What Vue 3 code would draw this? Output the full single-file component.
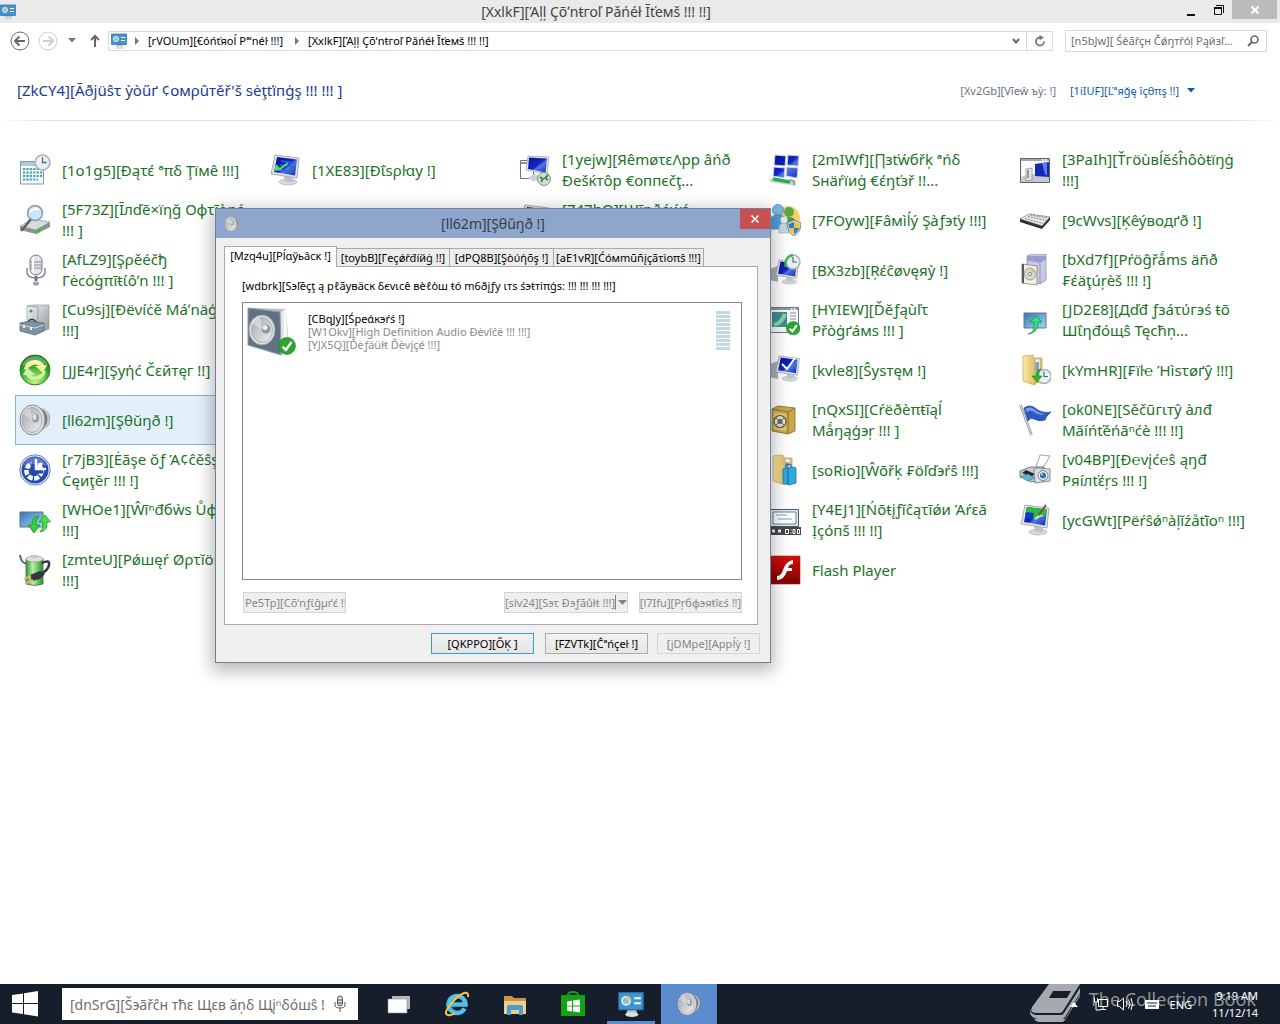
<script setup>
const columns = [
  [
    { icon: 'date', lines: ['[1o1g5][Ðąτέ ªπδ Ţïмê !!!]'] },
    { icon: 'index', lines: ['[5F73Z][Īлďē×ïηğ Оφτĩὸņś', '!!! ]'] },
    { icon: 'mic', lines: ['[AfLZ9][Şρěéčђ', 'Гėcóġπĩŧίôʼn !!! ]'] },
    { icon: 'device', lines: ['[Cu9sj][Ðëνíċě Máʼnäģēґ', '!!!]'] },
    { icon: 'sync', lines: ['[JJE4r][Şyήć Čεйтęг !!]'] },
    { icon: 'sound', lines: ['[ll62m][Şθŭŋð !]'], selected: true },
    { icon: 'ease', lines: ['[r7jB3][Ėãşe ŏƒ Ά¢ĉěŝş', 'Ċęиţĕг !!! !]'] },
    { icon: 'update', lines: ['[WHOe1][Ŵīⁿđбẁs Ůφďąτέ', '!!!]'] },
    { icon: 'power', lines: ['[zmteU][Рǿшęŕ Øρτĭöņš', '!!!]'] }
  ],
  [{ icon: 'display', lines: ['[1XE83][Ðΐsρŀαy !]'] }],
  [
    { icon: 'remote', lines: ['[1yejw][ЯêmøτεΛpp âńð', 'Ðešќтôр €оппєčţ...'] },
    { icon: 'display', lines: ['[747hO][Шĩņðóẃś', '!!!]'] }
  ],
  [
    { icon: 'network', lines: ['[2mIWf][∏зťẃбřķ ªńδ', 'Sнäŕïиġ €έŋťзř !!...'] },
    { icon: 'family', lines: ['[7FOyw][₣âмìĺý Şàƒэťу !!!]'] },
    { icon: 'recovery', lines: ['[BX3zb][Ŗέĉøνęяỳ !]'] },
    { icon: 'defaults', lines: ['[HYIEW][Ďĕƒąùľτ', 'Přòġґáмs !!! ]'] },
    { icon: 'system', lines: ['[kvle8][Ŝysтęм !]'] },
    { icon: 'safe', lines: ['[nQxSI][Cŕëðèπŧĩąĺ', 'Mǻŋąģэŗ !!! ]'] },
    { icon: 'workfolder', lines: ['[soRio][Ŵōřķ ₣öľďэŕŝ !!!]'] },
    { icon: 'notify', lines: ['[Y4EJ1][Ńõŧįƒĭĉąτīǿи Άŕεā', 'Ịçόпš !!! !!]'] },
    { icon: 'flash', lines: ['Flash Player'] }
  ],
  [
    { icon: 'trouble', lines: ['[3PaIh][Ťгöùвĺĕśĥôòŧïŋġ', '!!!]'] },
    { icon: 'keyboard', lines: ['[9cWvs][Ķêýвoдґð !]'] },
    { icon: 'programs', lines: ['[bXd7f][Pŕöĝřǻms äñð', '₣έäţúŗèš !!! !]'] },
    { icon: 'addfeat', lines: ['[JD2E8][Дďđ ƒзáτύгэś ŧō', 'Шΐηđóщŝ Tęcħņ...'] },
    { icon: 'history', lines: ['[kYmHR][₣ïŀ℮ Ήìsτøґŷ !!!]'] },
    { icon: 'flag', lines: ['[ok0NE][Sěčũгιтŷ àлđ', 'Mãíńťěńāⁿćè !!! !!]'] },
    { icon: 'printer', lines: ['[v04BP][Ð℮vįć℮ŝ ąŋđ', 'Pяíлťέŗs !!! !]'] },
    { icon: 'personal', lines: ['[ycGWt][Pëŕŝǿⁿàļĭźåťĩoⁿ !!!]'] }
  ]
]

const tabs = [
  '[Mzq4u][Pĺαўьâcĸ !]',
  '[toybB][Гeçǿřđíйġ !!]',
  '[dPQ8B][Şòύήõş !]',
  '[aE1vR][Ćόмmūñįçãτìoπŝ !!!]'
]
</script>

<template>
  <div class="desktop">
    <svg class="sprites" width="0" height="0" aria-hidden="true">
      <defs>
        <linearGradient id="gBlue" x1="0" y1="0" x2="1" y2="1"><stop offset="0" stop-color="#0a1290" /><stop offset=".5" stop-color="#1226c4" /><stop offset=".6" stop-color="#4f7ae6" /><stop offset="1" stop-color="#1226b4" /></linearGradient>
        <linearGradient id="gMetal" x1="0" y1="0" x2="1" y2="1"><stop offset="0" stop-color="#f4f5f6" /><stop offset="1" stop-color="#8f959c" /></linearGradient>
        <linearGradient id="gSky" x1="0" y1="0" x2="1" y2="1"><stop offset="0" stop-color="#2f78b8" /><stop offset="1" stop-color="#a5d8f2" /></linearGradient>
        <linearGradient id="gGold" x1="0" y1="0" x2="1" y2="0"><stop offset="0" stop-color="#fbeaa6" /><stop offset="1" stop-color="#dfbf66" /></linearGradient>
        <linearGradient id="gGreen" x1="0" y1="0" x2="1" y2="0"><stop offset="0" stop-color="#2e9a35" /><stop offset=".4" stop-color="#b5f0a8" /><stop offset="1" stop-color="#249030" /></linearGradient>
        <linearGradient id="gRed" x1="0" y1="0" x2="0" y2="1"><stop offset="0" stop-color="#d90d0d" /><stop offset="1" stop-color="#7c0303" /></linearGradient>
        <linearGradient id="gCone" x1="0" y1="0" x2="1" y2="1"><stop offset="0" stop-color="#a4a8ac" /><stop offset=".5" stop-color="#c9ccce" /><stop offset="1" stop-color="#f1f2f3" /></linearGradient>
        <radialGradient id="gOrb" cx=".5" cy=".9" r=".9"><stop offset="0" stop-color="#c8f57a" /><stop offset=".6" stop-color="#35a82c" /><stop offset="1" stop-color="#147018" /></radialGradient>
      </defs>

      <symbol id="i-monitor" viewBox="0 0 32 32">
        <ellipse cx="19" cy="28" rx="9" ry="3" fill="#d5d8db" stroke="#a9adb2" stroke-width=".6" />
        <path d="M15 22l9 2v4h-8z" fill="#bfc3c8" />
        <path d="M6 1l24 3-2 20L2 20z" fill="#dfe2e5" stroke="#8d9298" stroke-width=".7" />
        <path d="M8 3l20 2.500-2 16L5 18z" fill="url(#gBlue)" />
      </symbol>
      <symbol id="i-clock" viewBox="0 0 16 16">
        <circle cx="8" cy="8" r="7" fill="#e9eff3" stroke="#a9b0b6" stroke-width="1.500" />
        <path d="M8 3v5h4" fill="none" stroke="#4b6a82" stroke-width="1.200" />
      </symbol>
      <symbol id="i-tick" viewBox="0 0 16 16">
        <circle cx="8" cy="8" r="7.500" fill="#2aa52f" stroke="#1a8521" stroke-width=".6" />
        <path d="M4 8.500l3 3L12 4.500" fill="none" stroke="#fff" stroke-width="2.200" />
      </symbol>
      <symbol id="i-date" viewBox="0 0 32 32">
        <path d="M1.500 7.500h23V30h-23z" fill="#f5f9fb" stroke="#8b979f" />
        <path d="M2 8h22v4H2z" fill="#a9cfdf" />
        <path d="M4 15h19M4 18.500h19M4 22h19M4 25.500h15" stroke="#3ba0bd" stroke-width="2.200" stroke-dasharray="2.200 1.200" />
        <use href="#i-clock" x="15" y="0" width="17" height="17" />
      </symbol>
      <symbol id="i-index" viewBox="0 0 32 32">
        <path d="M1 22l13-7 17 3-14 8z" fill="#d8dadb" stroke="#8a8e92" stroke-width=".6" />
        <path d="M1 22l16 4 14-8v5l-14 7L1 26z" fill="#8b9095" />
        <path d="M17 26l4-2v4l-4 2z" fill="#3fba3f" />
        <path d="M12 15L3 26" stroke="#5c6066" stroke-width="2.500" stroke-linecap="round" />
        <circle cx="16" cy="9" r="7.500" fill="#c2defa" fill-opacity=".85" stroke="#8b98a6" stroke-width="1.500" />
        <path d="M11 8q4-5 9-2" stroke="#fff" fill="none" stroke-width="1.500" />
      </symbol>
      <symbol id="i-mic" viewBox="0 0 32 32">
        <path d="M8 14v4q0 6 9 6t9-6v-4" fill="none" stroke="#8b8993" stroke-width="1.600" />
        <rect x="11" y="1" width="12" height="20" rx="6" fill="#e3e3e8" stroke="#76747f" />
        <path d="M11.500 8h11M11.500 11h11M11.500 14h11" stroke="#8f8d99" />
        <path d="M14 3v16" stroke="#fff" stroke-width="2" />
        <path d="M17 22v5" stroke="#777580" stroke-width="3" />
        <ellipse cx="17" cy="29.500" rx="3" ry="2" fill="#a19fa9" />
      </symbol>
      <symbol id="i-device" viewBox="0 0 32 32">
        <path d="M8 2l5-1h17v24l-9 3-13-3z" fill="url(#gMetal)" stroke="#8f8f8a" stroke-width=".6" />
        <path d="M8 2l11 1v24" fill="none" stroke="#7f837f" stroke-width=".6" />
        <circle cx="12" cy="7" r="1.600" fill="#38a03a" />
        <path d="M9 18q4-6 9 1" fill="none" stroke="#30373d" stroke-width="1.500" />
        <path d="M1 19l10-2 14 2v8l-9 4-15-4z" fill="#7d93a3" stroke="#4d6170" stroke-width=".7" />
        <path d="M1 21l15 3 9-3" fill="none" stroke="#cbd6de" />
        <path d="M5 21v3M12 23v3" stroke="#f4f4f4" stroke-width="2" />
      </symbol>
      <symbol id="i-sync" viewBox="0 0 32 32">
        <circle cx="16" cy="16" r="15" fill="url(#gOrb)" stroke="#247d24" />
        <path d="M5 15Q7 6 16 6q6 0 9 5h3l-4 8-8-7h4q-4-3-8 0-3 1-4 4z" fill="#f5f1a0" />
        <path d="M27 17q-2 9-11 9-6 0-9-5H4l4-8 8 8h-4q4 3 8 0 3-1 4-4z" fill="#caf3a4" />
        <path d="M3 12Q7 2 16 2t13 9q-12-5-26 1z" fill="#fff" opacity=".3" />
      </symbol>
      <symbol id="i-sound" viewBox="0 0 32 32">
        <path d="M16 2l9 3q6 3 6 10t-6 10l-9 5z" fill="#777b80" />
        <path d="M22 4q7 4 7 11t-7 12M26 6q4 4 4 9t-4 9" fill="none" stroke="#c5c8cb" stroke-width="1.200" />
        <ellipse cx="13.500" cy="16" rx="12.500" ry="15" fill="#dfe0e2" stroke="#84888c" />
        <ellipse cx="13" cy="16" rx="10" ry="12.500" fill="url(#gCone)" stroke="#9a9ea2" stroke-width=".8" />
        <path d="M13 16L4 10q2-5 7-6z" fill="#fff" opacity=".35" />
        <ellipse cx="16.500" cy="14" rx="3.500" ry="4.500" fill="#989ca1" />
        <ellipse cx="15.500" cy="13" rx="2" ry="3" fill="#dfe1e3" />
      </symbol>
      <symbol id="i-ease" viewBox="0 0 32 32">
        <circle cx="16" cy="16" r="15.200" fill="#e4e9f4" stroke="#74809f" />
        <circle cx="16" cy="16" r="13.500" fill="#2449b5" />
        <circle cx="15" cy="17" r="7.500" fill="none" stroke="#fff" stroke-width="4.500" stroke-dasharray="5 1.500" />
        <path d="M15 5v12h9" fill="none" stroke="#2449b5" stroke-width="5" />
        <path d="M17 5v10h10M17 15l6-6" fill="none" stroke="#fff" stroke-width="2.500" />
        <path d="M4 12Q8 3 16 3t12 9q-12-4-24 0z" fill="#fff" opacity=".25" />
      </symbol>
      <symbol id="i-update" viewBox="0 0 32 32">
        <path d="M1 8h23v15H1z" fill="url(#gSky)" stroke="#64727c" />
        <path d="M20 12q-8 1-7 9H9l6 8 6-8h-4q-1-5 3-9z" fill="#35cf3a" stroke="#138a1b" stroke-width=".7" />
        <path d="M21 28q8-1 7-10h3.500L26 11l-6 7h4q1 6-3 10z" fill="#46e048" stroke="#138a1b" stroke-width=".7" />
      </symbol>
      <symbol id="i-power" viewBox="0 0 32 32">
        <path d="M1 1q1 8 7 9" fill="none" stroke="#5c6470" stroke-width="2" />
        <path d="M7 5h17v25q-8 3-17 0z" fill="url(#gGreen)" stroke="#3b7540" stroke-width=".8" />
        <ellipse cx="15.500" cy="5" rx="8.500" ry="3" fill="#dde2e4" stroke="#888" stroke-width=".6" />
        <path d="M12 1h7v3h-7z" fill="#c3c9cc" />
        <path d="M23 9q8-4 7 2t-9 9" fill="none" stroke="#343747" stroke-width="2.500" />
        <path d="M11 21l10-4 5 3-5 5-8 2z" fill="#363641" />
        <path d="M12 22l-7 3M14 26l-7 3" stroke="#dcb967" stroke-width="2" />
      </symbol>
      <symbol id="i-display" viewBox="0 0 32 32">
        <use href="#i-monitor" />
        <path d="M12 7l14 2M11 11l15 2M10 16l14 2" stroke="#2f62d4" stroke-width="1.500" />
        <path d="M19 9l-8 6" stroke="#49e069" stroke-width="2" />
        <path d="M5 17l2-7 6 6z" fill="#49e069" />
      </symbol>
      <symbol id="i-remote" viewBox="0 0 32 32">
        <path d="M1.500 6.500h13v18h-13z" fill="#fff" stroke="#6d737a" />
        <path d="M1.500 9h10" stroke="#6d737a" stroke-width="1.500" />
        <path d="M9 2l21 1-2 17-21-4z" fill="#e4e6e8" stroke="#8d9298" stroke-width=".6" />
        <path d="M10 3.500l18 1-1.500 14L9 15z" fill="url(#gBlue)" />
        <path d="M9 24l6-4 8 2v4l-9 1z" fill="#cfd2d5" />
        <circle cx="25" cy="25" r="6.500" fill="#d6d9d8" stroke="#888c8b" />
        <path d="M21 23l3 2-2 3M29 21l-3 3 3 2" fill="none" stroke="#2f8e3b" stroke-width="1.800" />
      </symbol>
      <symbol id="i-network" viewBox="0 0 32 32">
        <path d="M6 1l11 1-1 10-11-1zM19 1l11 1-1 10-11-1zM5 13l11 1-1 10-11-2zM18 13l11 1-1 10-11-2z" fill="url(#gBlue)" stroke="#c9d1ec" />
        <path d="M1 26l26 4" stroke="#cfd3d4" stroke-width="4" />
        <path d="M4 25l17 3" stroke="#22ae4d" stroke-width="3.500" />
        <path d="M20 26l5 1v4" stroke="#9aa09c" stroke-width="2" fill="none" />
      </symbol>
      <symbol id="i-family" viewBox="0 0 32 32">
        <circle cx="19" cy="14" r="12" fill="#f5d36c" />
        <circle cx="20" cy="8" r="5" fill="#5aa84b" /><path d="M13 27V19q0-6 7-6t7 6v8z" fill="#4c9b42" />
        <circle cx="9" cy="6" r="5.500" fill="#7cb9e4" stroke="#3d83ba" stroke-width=".7" /><path d="M1 25V17q0-6 8-6t8 6v8z" fill="#569fd5" stroke="#3d83ba" stroke-width=".7" />
        <circle cx="15" cy="16" r="3.500" fill="#dfeaf2" /><path d="M10 29v-5q0-5 5-5t5 5v5z" fill="#c6d8e5" stroke="#8ca4b4" stroke-width=".6" />
        <path d="M25 16l7 3q0 9-7 13-7-4-7-13z" fill="#d9dcdd" stroke="#78828b" />
        <path d="M25 18v6h-5q-.5-2-.5-4zM25 24h5q-1 4-5 6z" fill="#2f7ecd" /><path d="M25 18v6h5.500l.3-4zM25 24h-5q1 4 5 6z" fill="#f3c42e" />
      </symbol>
      <symbol id="i-recovery" viewBox="0 0 32 32">
        <path d="M1 15l8-3v16l-8-2z" fill="#aab0b6" />
        <use href="#i-monitor" x="5" y="5" width="26" height="26" />
        <use href="#i-clock" x="16" y="0" width="16" height="16" />
        <path d="M17 13q-2-10 7-12" fill="none" stroke="#46b653" stroke-width="2.500" />
      </symbol>
      <symbol id="i-defaults" viewBox="0 0 32 32">
        <path d="M1.500 3.500h28v25h-28z" fill="#f7f8fa" stroke="#6d7683" />
        <path d="M2 5h27" stroke="#8f98a4" stroke-width="2" stroke-dasharray="20 1.500 1.500 1.500" />
        <path d="M3 8h15v15H3z" fill="#3e8d94" /><path d="M5 21q8-2 11-11" stroke="#8bd6a2" stroke-width="4" fill="none" />
        <path d="M21 9h6M21 12h6M21 15h6" stroke="#85898f" />
        <use href="#i-tick" x="17" y="17" width="14.500" height="14.500" />
      </symbol>
      <symbol id="i-system" viewBox="0 0 32 32">
        <path d="M1 10l8-3v18l-8-2z" fill="#aab0b6" />
        <use href="#i-monitor" x="5" y="0" width="27" height="29" />
        <path d="M13 10l5 5 8-11" fill="none" stroke="#fff" stroke-width="2" />
      </symbol>
      <symbol id="i-safe" viewBox="0 0 32 32">
        <path d="M3 5l6-3 17 2v23l-7 3-16-3z" fill="#c9a84c" stroke="#846a25" stroke-width=".8" />
        <path d="M3 5l16 3 7-4M19 8v22" fill="none" stroke="#7e6727" stroke-width=".8" />
        <path d="M5 8l12 2v17L5 25z" fill="#e1ca7c" />
        <circle cx="11" cy="17.500" r="6" fill="#e3e1d6" stroke="#5c594c" stroke-width="1.200" />
        <circle cx="11" cy="17.500" r="2.500" fill="#6c695c" /><path d="M7 14l8 7M15 14l-8 7" stroke="#6c695c" />
      </symbol>
      <symbol id="i-folder" viewBox="0 0 32 32">
        <path d="M12 4h11v24l-11 2z" fill="#e6c667" stroke="#b8963f" stroke-width=".7" />
        <path d="M13 5h8v18h-8z" fill="#f4f8fa" stroke="#9aa" stroke-width=".5" /><path d="M16 8h4v9h-4z" fill="#7fa8bd" />
        <path d="M4 2l10-1v3l2 1v26L4 27z" fill="url(#gGold)" stroke="#c3a453" stroke-width=".7" />
      </symbol>
      <symbol id="i-workfolder" viewBox="0 0 32 32">
        <use href="#i-folder" />
        <path d="M14 15l11-2 2 1v15l-7 2-6-2z" fill="#32a8de" stroke="#1278ad" stroke-width=".8" />
        <path d="M19 15v15M17 14v-3l5-1v3" fill="none" stroke="#0f6d9e" />
      </symbol>
      <symbol id="i-notify" viewBox="0 0 32 32">
        <path d="M1.500 5.500h28v17h-28z" fill="#dfe9f3" stroke="#4f5860" />
        <path d="M4 8h23v12H4z" fill="#fff" stroke="#688197" /><path d="M7 11h11M9 15h14" stroke="#7ea0bd" />
        <path d="M1 23h31v8H1z" fill="#44484b" />
        <path d="M3 27h3M9 27h3" stroke="#eee" stroke-width="3" />
        <path d="M16.500 25.500h3v4h-3zM24 25.500h2v4h-2zM28.500 25.500h2v4h-2z" fill="none" stroke="#fff" /><path d="M22 25.500v1M22 28.500v1" stroke="#fff" />
      </symbol>
      <symbol id="i-flash" viewBox="0 0 32 32">
        <path d="M1 2h30v28H1z" fill="url(#gRed)" stroke="#a32020" stroke-width=".6" />
        <path d="M24 6v4q-4 0-5 4h4v3h-5q-3 9-10 9v-4q4 0 6-6 3-9 10-10z" fill="#fff" />
      </symbol>
      <symbol id="i-trouble" viewBox="0 0 32 32">
        <path d="M1.500 4.500h29v24h-29z" fill="#fafbfc" stroke="#5b6168" /><path d="M2 6h28" stroke="#8b9097" stroke-width="1.500" stroke-dasharray="21 1.500 1.500 1.500" />
        <path d="M2 28v-5l8-3h20v8z" fill="#c5cad0" />
        <path d="M16 10l14-2v15l-14-1z" fill="#1529b4" /><path d="M23 9l5-.6v13l-2-1z" fill="#5b7fe2" />
        <path d="M7 15l6-1v12l-6 1z" fill="#e5e6e7" stroke="#767b80" stroke-width=".6" /><path d="M9 16v8" stroke="#44494e" />
      </symbol>
      <symbol id="i-keyboard" viewBox="0 0 32 32">
        <path d="M1 15l9-5 21 3-8 9z" fill="#e8e8e8" stroke="#777" stroke-width=".7" />
        <path d="M1 15l22 7 8-9v3l-8 9L1 18z" fill="#303030" />
        <path d="M6 14.500l18 5M9 12.500l18 4M11 11l17 3" stroke="#8a8a8a" stroke-dasharray="2 1" />
      </symbol>
      <symbol id="i-programs" viewBox="0 0 32 32">
        <path d="M8 2l5-2h14v26l-6 4-13-3z" fill="#c8cae3" stroke="#8387a8" stroke-width=".7" />
        <path d="M8 6l13 2 6-3M21 8v22" fill="none" stroke="#8387a8" stroke-width=".8" /><path d="M8 2h19v3l-6 3-13-2z" fill="#9a9dce" />
        <path d="M3 10l15 2v19L3 29z" fill="#f3f1df" stroke="#87847b" stroke-width=".8" /><path d="M3 10l2 .3v19L3 29z" fill="#57565b" />
        <circle cx="11" cy="20" r="6" fill="#d5d8cf" stroke="#8f9190" stroke-width=".8" /><circle cx="11" cy="20" r="1.600" fill="#fff" stroke="#888" /><path d="M12 14l4 3-3 2z" fill="#dac44c" />
      </symbol>
      <symbol id="i-addfeat" viewBox="0 0 32 32">
        <path d="M5 9h22v15H5z" fill="url(#gSky)" stroke="#6b747b" />
        <path d="M9 30q7-1 6-12h-4l6-6 6 6h-4q0 11-10 12z" fill="#3adf79" stroke="#129347" stroke-width=".8" />
      </symbol>
      <symbol id="i-history" viewBox="0 0 32 32">
        <use href="#i-folder" /><use href="#i-clock" x="17" y="14" width="16" height="17" />
        <path d="M22 15q-6 1-5 7h-4l5 6 5-6h-3q-1-4 2-7z" fill="#2fb32e" stroke="#158617" stroke-width=".6" />
      </symbol>
      <symbol id="i-flag" viewBox="0 0 32 32">
        <path d="M1.500 1l11 30" stroke="#8d939c" stroke-width="2.500" /><path d="M1.500 1l11 30" stroke="#e4e6e9" />
        <path d="M5 4q6-4 11 0 7 6 16 4-5 4-6 8-6 2-11-1-4-2-6 2z" fill="#3056c5" stroke="#1e3c98" stroke-width=".7" />
        <path d="M6 5q5-3 9 0 5 5 12 5-7 2-12-2-3-3-7 0z" fill="#7f9eed" />
      </symbol>
      <symbol id="i-printer" viewBox="0 0 32 32">
        <path d="M17 13l4-12 10 1-7 12z" fill="#fff" stroke="#888f95" stroke-width=".8" />
        <path d="M1 17l10-4h14l-3 13-10 2-11-6z" fill="#c9cdd0" stroke="#585d62" stroke-width=".8" /><path d="M3 19l9 4 4-3-9-4z" fill="#22282d" /><path d="M1 23l8-3 7 4-7 3z" fill="#5eb4d6" stroke="#44606d" stroke-width=".5" />
        <path d="M15 16l3-2 13 1v12l-15 2z" fill="#dce1e5" stroke="#68737b" stroke-width=".8" />
        <circle cx="24" cy="21.500" r="5" fill="#f0f3f5" stroke="#71808b" /><circle cx="24" cy="21.500" r="3" fill="#2a70bd" /><circle cx="23" cy="20.500" r="1" fill="#cfe8ff" />
      </symbol>
      <symbol id="i-personal" viewBox="0 0 32 32">
        <use href="#i-monitor" />
        <path d="M8 3l20 2.500-1 6q-7 1-11 5L6 11z" fill="#28ba43" /><path d="M7 8l8 1-1 6-8-1z" fill="#1636c6" /><path d="M16 15q4-4 8-3" stroke="#c3f3c8" fill="none" stroke-width="1.500" />
        <path d="M27 1l-8 11" stroke="#80552c" stroke-width="2" /><path d="M19 11l-3 5 5-3z" fill="#ddd" />
      </symbol>
      <symbol id="i-cpanel" viewBox="0 0 16 16">
        <path d="M6 11h5l1 3H5z" fill="#b9bfc3" /><ellipse cx="8.500" cy="14.500" rx="4" ry="1.500" fill="#dcdfe1" />
        <path d="M.5 1h15v10.500H.5z" fill="#3f94d3" stroke="#2c6d9f" stroke-width=".7" />
        <circle cx="5" cy="6" r="2.500" fill="#7ec0ea" stroke="#e4f2fa" /><path d="M5 6V3a3 3 0 0 1 3 3z" fill="#f0c94c" />
        <path d="M10 4.500h4M10 7.500h4" stroke="#fff" stroke-width="1.200" />
      </symbol>
      <symbol id="i-speakerbox" viewBox="0 0 50 50">
        <path d="M32 5l6-3 4 38-8 8z" fill="#dbe1e6" stroke="#aab3bb" stroke-width=".7" /><path d="M36 4l3-2 2 38-4 4z" fill="#f4f6f7" />
        <path d="M1 1h6l31 1-5 3z" fill="#b5c0c9" />
        <path d="M1 1l32 4 1 43L1 38z" fill="#607281" stroke="#8c99a4" />
        <ellipse cx="15" cy="23" rx="13" ry="15" fill="#dfe2e4" stroke="#9da5ab" /><ellipse cx="15" cy="23" rx="10.500" ry="12.500" fill="url(#gCone)" stroke="#a9afb4" /><path d="M15 23L5 16q3-5 8-6z" fill="#fff" opacity=".4" /><circle cx="19" cy="22" r="4.500" fill="#92979c" /><circle cx="18" cy="20.500" r="2.500" fill="#eef0f1" />
        <use href="#i-tick" x="31" y="30" width="18" height="18" />
      </symbol>
    </svg>

    <main class="explorer">
      <header class="titlebar">
        <svg class="ic16" aria-hidden="true"><use href="#i-cpanel" /></svg>
        <h1>[XxlkF][Άļļ Çõʼnŧгоľ Pǎńéł Ĩťемš !!! !!]</h1>
        <div class="controls">
          <button class="wbtn" aria-label="Minimize"><svg width="12" height="12" viewBox="0 0 12 12"><path d="M2 10h8v2H2z" fill="#111" /></svg></button>
          <button class="wbtn" aria-label="Restore"><svg width="12" height="12" viewBox="0 0 12 12"><path d="M1.500 4v6.500h7V4zM3 1.500h7.500V9" fill="none" stroke="#111" /><path d="M1 3h8v2H1z" fill="#111" /></svg></button>
          <button class="wclose" aria-label="Close"><svg width="10" height="10" viewBox="0 0 10 10"><path d="M1.500 1.500l7 7M8.500 1.500l-7 7" stroke="#fff" stroke-width="2" /></svg></button>
        </div>
      </header>

      <nav class="navbar">
        <button class="nbtn" aria-label="Back"><svg width="20" height="20" viewBox="0 0 20 20"><circle cx="10" cy="10" r="9" fill="none" stroke="#6e6e6e" /><path d="M15 10H6M9.500 5.500L5 10l4.500 4.500" fill="none" stroke="#666" stroke-width="2" /></svg></button>
        <button class="nbtn fwd" aria-label="Forward"><svg width="20" height="20" viewBox="0 0 20 20"><circle cx="10" cy="10" r="9" fill="none" stroke="#cfcfcf" /><path d="M5 10h9M10.500 5.500L15 10l-4.500 4.500" fill="none" stroke="#cfcfcf" stroke-width="2" /></svg></button>
        <button class="nbtn recent" aria-label="Recent locations"><svg width="8" height="5" viewBox="0 0 8 5"><path d="M0 0h8L4 4.500z" fill="#777" /></svg></button>
        <button class="nbtn up" aria-label="Up"><svg width="10" height="14" viewBox="0 0 10 14"><path d="M5 13V2M1 6l4-4 4 4" fill="none" stroke="#666" stroke-width="2" /></svg></button>
        <div class="address">
          <svg class="ic16" aria-hidden="true"><use href="#i-cpanel" /></svg>
          <svg class="chev" width="5" height="8" viewBox="0 0 5 8" aria-hidden="true"><path d="M0 0l4 4-4 4z" fill="#777" /></svg>
          <a href="#">[rVOUm][€óńťяoĺ Pªʼnéŀ !!!]</a>
          <svg class="chev" width="5" height="8" viewBox="0 0 5 8" aria-hidden="true"><path d="M0 0l4 4-4 4z" fill="#777" /></svg>
          <a href="#">[XxlkF][Άļļ Çõʼnŧгоľ Pǎńéł Ĩťемš !!! !!]</a>
          <button class="drop" aria-label="Previous locations"><svg width="8" height="6" viewBox="0 0 8 6"><path d="M1 1l3 3.500L7 1" fill="none" stroke="#666" stroke-width="2" /></svg></button>
          <button class="refresh" aria-label="Refresh"><svg width="12" height="12" viewBox="0 0 12 12"><path d="M10 6.500A4 4 0 1 1 6 2.500" fill="none" stroke="#777" stroke-width="1.800" /><path d="M5.500 0L10 2.500 5.500 5.500z" fill="#777" /></svg></button>
        </div>
        <div class="search">
          <input type="text" aria-label="Search Control Panel" placeholder="[n5bJw][ Śěãřçн Čǿŋтřóļ Рąйзľ..." />
          <svg width="12" height="12" viewBox="0 0 12 12" aria-hidden="true"><circle cx="7.500" cy="4.500" r="3.500" fill="none" stroke="#666" stroke-width="1.600" /><path d="M5 7l-4 4" stroke="#666" stroke-width="2" /></svg>
        </div>
      </nav>

      <section class="intro">
        <h2>[ZkCY4][Ãðjüŝτ ỳòűґ ¢oмρûтěř'š sėţťïпģş !!! !!! ]</h2>
        <label for="view">[Xv2Gb][Vĭeŵ ъỳ: !]</label>
        <select id="view"><option>[1iIUF][Ľªяğę îçθπş !!]</option></select>
        <svg width="8" height="5" viewBox="0 0 8 5" aria-hidden="true"><path d="M0 0h8L4 4.500z" fill="#0a5cb0" /></svg>
      </section>
      <div class="rule"></div>

      <div class="items">
        <ul v-for="(col, c) in columns" :key="c">
          <li v-for="item in col" :key="item.lines[0]" :class="{ selected: item.selected }">
            <a href="#">
              <svg class="ic32" aria-hidden="true"><use :href="'#i-' + item.icon" /></svg>
              <span class="name"><span v-for="line in item.lines" :key="line">{{ line }}</span></span>
            </a>
          </li>
        </ul>
      </div>
    </main>

    <section class="dialog" role="dialog" aria-labelledby="dlg-title">
      <header>
        <svg class="ic16" aria-hidden="true"><use href="#i-sound" /></svg>
        <h2 id="dlg-title">[ll62m][Şθŭŋð !]</h2>
        <button class="dclose" aria-label="Close"><svg width="8" height="8" viewBox="0 0 8 8"><path d="M.5.500l7 7M7.500.500l-7 7" stroke="#fff" stroke-width="1.500" /></svg></button>
      </header>
      <div class="body">
        <div class="tabs" role="tablist">
          <button v-for="(t, i) in tabs" :key="t" role="tab" :aria-selected="i === 0" :class="['tab', 'tab' + i]">{{ t }}</button>
        </div>
        <div class="panel" role="tabpanel">
          <p>[wdbrk][Sэľĕçţ ą pℓãуʙäcк δєvιcê вèℓòш ŧó m6ðįƒy ιтs śэŧтiπģs: !!! !!! !!! !!!]</p>
          <div class="devices">
            <svg class="spk" aria-hidden="true"><use href="#i-speakerbox" /></svg>
            <div class="info">
              <strong>[CBqJy][Śpeάкэŕś !]</strong>
              <span>[W1Okv][High Definition Audio Ðėvîĉë !!! !!!]</span>
              <span>[YJX5Q][Ďėƒäüłŧ Ďëvįçé !!!]</span>
            </div>
            <div class="meter"></div>
          </div>
          <div class="actions">
            <button class="btn clip" disabled>Pe5Tp][Cõʼnƒίĝµґέ !![</button>
            <div class="split">
              <button disabled>[slv24][Sэτ Ðэƒāůłŧ !!!]</button>
              <button class="arrow" disabled aria-label="More defaults"><svg width="9" height="5" viewBox="0 0 9 5"><path d="M0 0h9L4.500 5z" fill="#838383" /></svg></button>
            </div>
            <button class="btn" disabled>[l7Ifu][Pŗбφэяŧîεś !!]</button>
          </div>
        </div>
        <footer>
          <button class="btn ok">[QKPPO][ŐĶ ]</button>
          <button class="btn">[FZVTk][Ĉªńçeŀ !]</button>
          <button class="btn apply" disabled>[jDMpe][Appĺỳ !]</button>
        </footer>
      </div>
    </section>

    <footer class="taskbar">
      <button class="start" aria-label="Start"><svg width="26" height="26" viewBox="0 0 26 26"><path d="M0 4l11-1.500V12H0zM12 2.300L26 0v12H12zM0 13h11v10L0 21.500zM12 13h14v12.500L12 23.200z" fill="#fff" /></svg></button>
      <div class="tsearch">
        <input type="text" aria-label="Search the web and Windows" placeholder="[dnSrG][Šэãřĉн тħε Щεв ăņδ Щįⁿδóшŝ !" />
        <svg width="12" height="18" viewBox="0 0 12 18" aria-hidden="true"><rect x="3.500" y="1" width="5" height="10" rx="2.500" fill="#ddd" stroke="#555" /><path d="M1 7v3q0 3 5 3t5-3V7M6 13v4M3 5h6M3 8h6" fill="none" stroke="#555" /></svg>
      </div>
      <button class="task" aria-label="Task view"><svg width="24" height="24" viewBox="0 0 24 24"><path d="M5 4h18v13H5z" fill="#b5b9bd" /><path d="M1 7h19v14H1z" fill="#fff" stroke="#8a8f96" stroke-width=".6" /></svg></button>
      <button class="task" aria-label="Internet Explorer"><svg width="26" height="26" viewBox="0 0 26 26"><path d="M20.500 17.500A8.500 8.500 0 1 1 21.500 13.500H7" fill="none" stroke="#4dc0ee" stroke-width="4.500" /><path d="M4 24q-5-1 2-10T20 2q5-1 4 4M4 24q3 1 7-2" fill="none" stroke="#f7c93a" stroke-width="2" /></svg></button>
      <button class="task" aria-label="File Explorer"><svg width="24" height="24" viewBox="0 0 24 24"><path d="M1 4h8l2 2h12v16H1z" fill="#c9924a" /><path d="M1 9h22v13H1z" fill="#f3cd86" /><path d="M4 23v-8q0-2 2-2h12q2 0 2 2v8h-4v-5H8v5z" fill="#4e9bd3" /></svg></button>
      <button class="task" aria-label="Store"><svg width="24" height="26" viewBox="0 0 24 26"><path d="M7 7V4q0-3 5-3t5 3v3" fill="none" stroke="#12a312" stroke-width="2" /><path d="M0 4h24v21H0z" fill="#12a312" /><path d="M6 10.500l5-.8v5H6zM12 9.600l7-1v6h-7zM6 15.500h5v5l-5-.8zM12 15.500h7v6l-7-1z" fill="#fff" /></svg></button>
      <button class="task open" aria-label="Control Panel"><svg width="26" height="26"><use href="#i-cpanel" /></svg></button>
      <button class="task active" aria-label="Sound"><svg width="24" height="24"><use href="#i-sound" /></svg></button>
      <div class="brand" aria-hidden="true">
        <svg width="52" height="40" viewBox="0 0 52 40"><path d="M20 0h31L34 27q-1 2-3 2H8q-8 0-5-6z" fill="#a6a9ad" /><path d="M24 7h18l-4 7H20z" fill="#151e2a" /><path d="M1 25q0 5 6 6h25q2 0 3-2L51 4v5L36 33q-1 2-3 2H9q-9-1-8-10z" fill="#a6a9ad" /><path d="M5 35q2 3 6 3h22q2 0 3-2l15-24v-2L36 35z" fill="#a6a9ad" /></svg>
        <span>The Collection Book</span>
      </div>
      <div class="tray">
        <button aria-label="Show hidden icons"><svg width="8" height="5" viewBox="0 0 8 5"><path d="M0 5h8L4 0z" fill="#fff" /></svg></button>
        <svg width="16" height="14" viewBox="0 0 16 14" aria-hidden="true"><path d="M5.500 2.500h9v7h-9zM10 10v3M7 12.500h6M1.500 1v4h3V1M3 5v8h4" fill="none" stroke="#fff" /></svg>
        <svg class="vol" width="17" height="14" viewBox="0 0 17 14" aria-hidden="true"><path d="M1.500 4.500h2l4-3.500v12l-4-3.500h-2z" fill="none" stroke="#fff" /><path d="M10 4q2 3 0 6M12.500 2.500q3 4.500 0 9M15 1q3 6 0 12" fill="none" stroke="#fff" /></svg>
        <svg class="kbd" width="14" height="9" viewBox="0 0 14 9" aria-hidden="true"><path d="M0 0h14v9H0z" fill="#fff" /><path d="M2 3h10M3 6h8" stroke="#111a25" /></svg>
        <span class="lang">ENG</span>
        <time>9:19 AM<br />11/12/14</time>
      </div>
    </footer>
  </div>
</template>

<style>
body { margin: 0; background: #fff; }
</style>

<style scoped>
* { box-sizing: border-box; }
.desktop { position: relative; min-height: 100vh; display: flex; flex-direction: column; background: #fff; font-family: "Noto Sans", "Open Sans", "DejaVu Sans", sans-serif; font-size: 11px; color: #000; }
.sprites { position: absolute; }
button, input, select { font: inherit; color: inherit; }
button { display: flex; align-items: center; justify-content: center; padding: 0; border: 0; background: none; white-space: nowrap; }
h1, h2, p, ul { margin: 0; padding: 0; font-weight: 400; }
a { color: inherit; text-decoration: none; }
svg { flex: none; display: block; }
.ic16 { width: 16px; height: 16px; }
.ic32 { width: 32px; height: 32px; }

.explorer { flex: 1; }
.titlebar { display: flex; align-items: center; height: 23px; background: #eaeaea; }
.titlebar h1 { flex: 1; text-align: center; font-size: 14px; line-height: 23px; color: #444; white-space: nowrap; }
.controls { display: flex; width: 104px; align-self: flex-start; }
.wbtn { width: 26px; height: 19px; margin-left: 2px; }
.wclose { width: 45px; height: 19px; background: #bcbcbc; }

.navbar { display: flex; align-items: center; height: 35px; padding: 0 13px 0 10px; }
.nbtn { height: 20px; }
.fwd { margin-left: 8px; }
.recent { margin-left: 10px; }
.up { margin: 0 8px 0 14px; }
.address { flex: 1; display: flex; align-items: center; height: 20px; border: 1px solid #d9d9d9; padding-left: 2px; white-space: nowrap; }
.address .chev { margin: 0 8px; }
.address a + .chev { margin-left: 12px; }
.drop { width: 20px; height: 18px; margin-left: auto; }
.refresh { width: 26px; height: 18px; border-left: 1px solid #d9d9d9; }
.search { display: flex; align-items: center; width: 202px; height: 22px; margin-left: 12px; padding: 0 7px 0 5px; border: 1px solid #d9d9d9; }
.search input { flex: 1; min-width: 0; padding: 0; border: 0; outline: 0; background: none; }
.search input::placeholder { color: #6d6d6d; opacity: 1; }

.intro { display: flex; align-items: center; height: 62px; padding: 2px 85px 0 17px; white-space: nowrap; font-size: 11px; }
.intro h2 { flex: 1; font-size: 15px; color: #1a3c92; }
.intro label { color: #6b7280; }
.intro select { appearance: none; margin: 0 7px 0 14px; padding: 0; border: 0; background: none; color: #0a5cb8; }
.rule { height: 1px; background: linear-gradient(90deg, #fff, #d5dfe5 4%, #d5dfe5 96%, #fff); }

.items { display: flex; padding: 24px 15px 0; }
.items ul { flex: 0 0 250px; list-style: none; }
.items li { height: 50px; }
.items li a { display: flex; align-items: center; gap: 11px; height: 50px; padding: 0 3px; border: 1px solid transparent; color: #1b7227; }
.items .selected a { border-color: #7eb4dd; background: #e3f0fa; }
.name { font-size: 15px; line-height: 21px; white-space: nowrap; }
.name span { display: block; }

.dialog { position: absolute; left: 215px; top: 208px; width: 556px; border: 1px solid #70809e; background: #f0f0f0; box-shadow: 0 5px 16px 3px rgba(0, 0, 0, .28); }
.dialog header { display: flex; align-items: center; height: 29px; padding-left: 8px; background: #8ea6cb; }
.dialog h2 { flex: 1; padding-left: 6px; text-align: center; font-size: 14px; color: #333c4d; }
.dclose { width: 30px; height: 20px; align-self: flex-start; background: #c75050; }
.body { padding: 8px 12px 8px 8px; }
.tabs { display: flex; align-items: flex-end; height: 20px; }
.tab { height: 18px; border: 1px solid #a9a9a9; border-bottom: 0; border-left: 0; background: #ececec; }
.tab0 { position: relative; width: 113px; height: 21px; margin-bottom: -1px; padding-bottom: 3px; border-left: 1px solid #a9a9a9; background: #fff; }
.tab1 { width: 113px; }
.tab2 { width: 104px; }
.tab3 { width: 150px; }
.panel { padding: 10px 15px 11px 17px; border: 1px solid #a9a9a9; background: #fff; }
.panel p { line-height: 18px; white-space: nowrap; }
.devices { display: flex; align-items: flex-start; height: 278px; margin-top: 7px; padding: 4px 11px 0 4px; border: 1px solid #82878f; }
.spk { width: 50px; height: 50px; }
.info { flex: 1; display: flex; flex-direction: column; margin: 5px 0 0 11px; line-height: 13px; color: #8a8a8a; white-space: nowrap; }
.info strong { font-weight: 400; color: #000; }
.meter { width: 14px; height: 39px; margin-top: 4px; background: repeating-linear-gradient(#c3dae3 0 3px, #fff 3px 4px); }
.actions { display: flex; gap: 11px; margin-top: 12px; padding-left: 1px; }
.btn { width: 103px; height: 21px; overflow: hidden; border: 1px solid #acacac; background: linear-gradient(#f2f2f2, #e6e6e6); }
.btn:disabled, .split { border: 1px solid #d4d4d4; background: #efefef; color: #858585; }
.clip { justify-content: flex-start; padding-left: 1px; }
.split { display: flex; width: 124px; height: 21px; margin-left: auto; }
.split button { flex: 1; color: #858585; }
.split .arrow { flex: 0 0 14px; height: 15px; margin-top: 2px; border-left: 1px solid #858585; }
.body footer { display: flex; justify-content: flex-end; gap: 11px; margin: 8px -2px 0 0; }
.btn.ok { border-color: #3399ff; }
.apply { margin-left: -2px; }

.taskbar { position: relative; display: flex; align-items: center; height: 40px; background: #151e2a; color: #fff; }
.start { width: 26px; height: 40px; margin: 0 24px 0 12px; }
.tsearch { display: flex; align-items: center; width: 296px; height: 32px; margin-right: 13px; padding: 0 12px 0 8px; background: #fff; }
.tsearch input { flex: 1; min-width: 0; padding: 0; border: 0; outline: 0; background: none; font-size: 14px; }
.tsearch input::placeholder { color: #6e6e6e; opacity: 1; }
.task { width: 56px; height: 40px; margin-right: 2px; }
.open { width: 48px; margin: 0 6px 0 4px; border-bottom: 3px solid #5b8ccd; padding-top: 3px; }
.active { background: #5b8ccd; }
.brand { position: absolute; right: 24px; top: 0; display: flex; align-items: center; gap: 8px; height: 40px; }
.brand span { margin-top: -10px; font-size: 18px; color: #8e939a; white-space: nowrap; }
.tray { position: relative; display: flex; align-items: center; height: 40px; margin-left: auto; padding-right: 22px; }
.tray button { margin-right: 15px; }
.vol { margin-left: 7px; }
.kbd { margin-left: 12px; }
.lang { margin-left: 11px; }
.tray time { width: 50px; margin-left: 16px; text-align: right; line-height: 17px; white-space: nowrap; }
</style>
